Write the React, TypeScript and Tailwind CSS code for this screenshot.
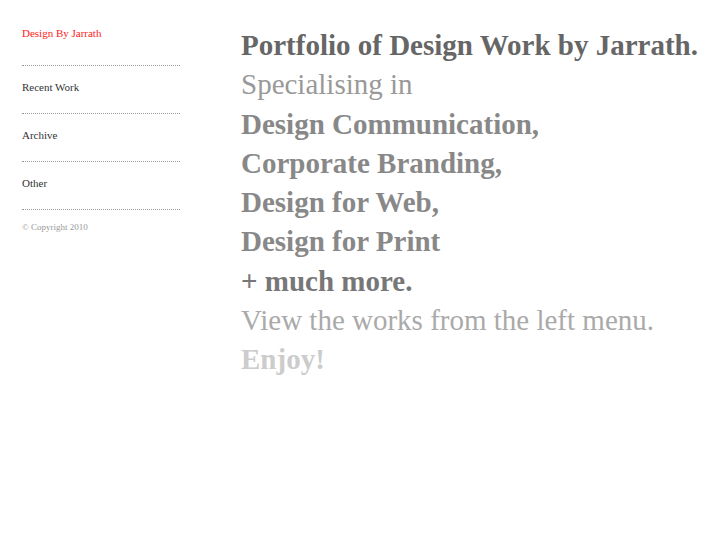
export default function App() {
  const menu = ['Recent Work', 'Archive', 'Other']

  return (
    <div className="flex min-h-[545px] bg-white font-['Liberation_Serif',serif]">
      {/* Sidebar */}
      <aside className="ml-[22px] w-[158px] shrink-0">
        <div className="border-b border-dotted border-[#999] pt-[27px] pb-[26px] text-[11px] leading-[12px] text-[#ff1a1a]">
          Design By Jarrath
        </div>
        {menu.map((item) => (
          <div
            key={item}
            className="border-b border-dotted border-[#999] pt-[15px] pb-[20px] text-[11px] leading-[12px] text-[#333]"
          >
            {item}
          </div>
        ))}
        <p className="mt-[12px] text-[9px] leading-[10px] text-[#999]">© Copyright 2010</p>
      </aside>

      {/* Main */}
      <main className="ml-[61px] pt-[26px] text-[29px] leading-[39.3px]">
        <p className="font-bold text-[#666]">Portfolio of Design Work by Jarrath.</p>
        <p className="text-[#999]">Specialising in</p>
        <p className="font-bold text-[#888]">Design Communication,</p>
        <p className="font-bold text-[#888]">Corporate Branding,</p>
        <p className="font-bold text-[#888]">Design for Web,</p>
        <p className="font-bold text-[#888]">Design for Print</p>
        <p className="font-bold text-[#777]">+ much more.</p>
        <p className="text-[#aaa]">View the works from the left menu.</p>
        <p className="font-bold text-[#ccc]">Enjoy!</p>
      </main>
    </div>
  )
}
